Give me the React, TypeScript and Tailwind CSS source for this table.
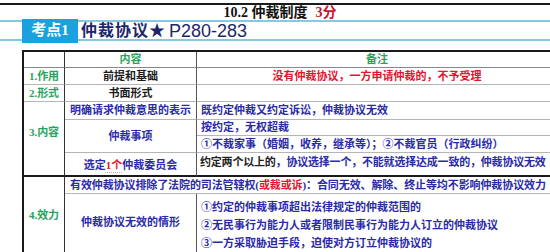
const cjk = { fontFamily: '"Liberation Serif", "Noto Sans CJK SC", serif' };

function Cell({
  className = "",
  children,
}: {
  className?: string;
  children?: React.ReactNode;
}) {
  return (
    <div className={`flex items-center text-[11px] font-bold leading-none whitespace-nowrap overflow-hidden ${className}`}>
      {children}
    </div>
  );
}

export default function App() {
  const green = "text-[#27a35c]";
  const blue = "text-[#2b2ba8]";
  const red = "text-[#e3142e]";

  return (
    <div className="w-[550px] h-[252px] overflow-hidden bg-white" style={cjk}>
      {/* top rule + chapter title */}
      <div className="pt-[3px]">
        <div className="h-[2px] bg-[#1a1a1a]" />
      </div>
      <div className="h-[15px] flex items-center justify-center pl-[10px] text-[14px] font-bold text-[#111] leading-none">
        <span>10.2 仲裁制度</span>
        <span className="ml-[8px] text-[#c8142f]">3分</span>
      </div>

      {/* topic band */}
      <div className="h-[21px] border-y-2 border-[#86c8dd] flex items-center">
        <div className="ml-[22px] w-[56px] h-[24px] bg-[#1ba1e0] flex items-center justify-center text-white text-[15px] font-bold leading-none">
          考点1
        </div>
        <div className="ml-[3px] flex items-center text-[#1d2668] leading-none">
          <span className="text-[16px] font-bold tracking-[1px]">仲裁协议★</span>
          <span className="ml-[3px] text-[18px]" style={{ fontFamily: '"Liberation Sans", sans-serif' }}>
            P280-283
          </span>
        </div>
      </div>

      {/* table */}
      <div className="mt-[9px] ml-[22px] w-[535px] border-t-2 border-l-2 border-[#1a1a1a] grid grid-cols-[41px_132px_1fr] grid-rows-[16px_17px_17px_18px_16px_17px_24px_17px_58px]">
        {/* header */}
        <Cell className="border-r border-r-[#333] border-b border-b-[#888]" />
        <Cell className={`justify-center border-r border-r-[#555] border-b border-b-[#888] ${green}`}>内容</Cell>
        <Cell className={`justify-center border-b border-b-[#888] ${green}`}>备注</Cell>

        {/* 1.作用 */}
        <Cell className={`justify-center border-r border-r-[#333] border-b border-b-[#b5b5b5] ${green}`}>1.作用</Cell>
        <Cell className="justify-center border-r border-r-[#555] border-b border-b-[#b5b5b5] text-[#1a1a1a]">前提和基础</Cell>
        <Cell className={`justify-center border-b border-b-[#b5b5b5] ${red}`}>没有仲裁协议，一方申请仲裁的，不予受理</Cell>

        {/* 2.形式 */}
        <Cell className={`justify-center border-r border-r-[#333] border-b border-b-[#b5b5b5] ${green}`}>2.形式</Cell>
        <Cell className="justify-center border-r border-r-[#555] border-b border-b-[#b5b5b5] text-[#1a1a1a]">书面形式</Cell>
        <Cell className="border-b border-b-[#b5b5b5]" />

        {/* 3.内容 */}
        <Cell className={`row-span-4 justify-center pb-[12px] border-r border-r-[#333] border-b-2 border-b-[#1a1a1a] ${green}`}>
          3.内容
        </Cell>
        <Cell className={`justify-center border-r border-r-[#555] border-b border-b-[#b5b5b5] ${blue}`}>明确请求仲裁意思的表示</Cell>
        <Cell className={`pl-[4px] border-b border-b-[#b5b5b5] ${blue}`}>既约定仲裁又约定诉讼，仲裁协议无效</Cell>

        <Cell className={`row-span-2 justify-center border-r border-r-[#555] border-b border-b-[#b5b5b5] ${blue}`}>仲裁事项</Cell>
        <Cell className={`pl-[4px] border-b border-b-[#b5b5b5] ${blue}`}>按约定，无权超裁</Cell>
        <Cell className={`pl-[4px] border-b border-b-[#b5b5b5] ${blue}`}>①不裁家事（婚姻，收养，继承等）；②不裁官员（行政纠纷）</Cell>

        <Cell className={`justify-center pt-[3px] border-r border-r-[#555] border-b-2 border-b-[#1a1a1a] ${blue}`}>
          选定
          <span className={`${red} underline decoration-dotted decoration-[#f09aa6] underline-offset-[3px]`}>1个</span>
          仲裁委员会
        </Cell>
        <Cell className={`pl-[3px] pb-[4px] tracking-[-0.2px] border-b-2 border-b-[#1a1a1a] ${blue}`}>
          <span className="text-[#222]">约定两个以上的</span>，协议选择一个，不能就选择达成一致的，仲裁协议无效
        </Cell>

        {/* 4.效力 */}
        <Cell className={`row-span-2 justify-center pt-[2px] border-r border-r-[#333] ${green}`}>4.效力</Cell>
        <Cell className={`col-span-2 pl-[5px] tracking-[-0.1px] border-b border-b-[#b5b5b5] ${blue}`}>
          有效仲裁协议排除了法院的司法管辖权(<span className={red}>或裁或诉</span>)：合同无效、解除、终止等均不影响仲裁协议效力
        </Cell>

        <Cell className={`justify-center border-r border-r-[#555] pb-[2px] ${blue}`}>仲裁协议无效的情形</Cell>
        <div className={`flex flex-col pl-[4px] pt-[4px] text-[11px] font-bold leading-[18px] whitespace-nowrap ${blue}`}>
          <span>①约定的仲裁事项超出法律规定的仲裁范围的</span>
          <span>②无民事行为能力人或者限制民事行为能力人订立的仲裁协议</span>
          <span>③一方采取胁迫手段，迫使对方订立仲裁协议的</span>
        </div>
      </div>
    </div>
  );
}
